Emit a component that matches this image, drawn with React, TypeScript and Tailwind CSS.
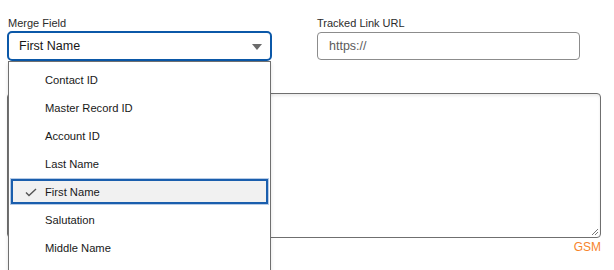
import React from "react";

const items = [
  "Contact ID",
  "Master Record ID",
  "Account ID",
  "Last Name",
  "First Name",
  "Salutation",
  "Middle Name",
  "Suffix",
];

const App: React.FC = () => {
  const selected = "First Name";

  return (
    <div className="relative h-[270px] w-[614px] overflow-hidden bg-white font-['Liberation_Sans',Arial,sans-serif] text-[#181818]">
      <div className="flex pl-[7px] pt-[16px]">
        <div className="w-[265px]">
          <label className="block pl-[1px] text-[11px] leading-[14px] text-[#2b2b2b]">
            Merge Field
          </label>
          <div className="mt-[1px] flex h-[30px] items-center justify-between rounded-[5px] border-2 border-[#0b58a8] bg-white pl-[10px] pr-[8px] text-[12.5px]">
            <span>First Name</span>
            <svg width="10" height="6" viewBox="0 0 10 6" className="mt-[1px]">
              <path d="M0 0 L10 0 L5 6 Z" fill="#6b6b6b" />
            </svg>
          </div>
        </div>
        <div className="ml-[45px] w-[263px]">
          <label className="block text-[11px] leading-[14px] text-[#2b2b2b]">
            Tracked Link URL
          </label>
          <div className="mt-[2px] flex h-[28px] items-center rounded-[4px] border border-[#8c8c8c] bg-white pl-[11px] text-[12.5px] text-[#5c5c5c]">
            https://
          </div>
        </div>
      </div>

      <div className="mt-[32px] pl-[7px]">
        <div className="relative h-[145px] w-[594px] rounded-[4px] border border-[#6f6f6f] bg-white shadow-[inset_0_2px_3px_rgba(0,0,0,0.08)]">
          <svg
            width="8"
            height="8"
            viewBox="0 0 8 8"
            className="absolute bottom-[1px] right-[1px]"
          >
            <path d="M7 1 L1 7 M7 4 L4 7" stroke="#777" strokeWidth="1" />
          </svg>
        </div>
        <div className="flex w-[594px] justify-end pt-[2px] text-[12px] leading-[14px] text-[#f7842b]">
          GSM
        </div>
      </div>

      <div className="absolute left-[8px] top-[61px] h-[240px] w-[263px] border border-[#707070] bg-white pt-[4px] shadow-[0_2px_4px_rgba(0,0,0,0.12)]">
        {items.map((item) =>
          item === selected ? (
            <div key={item} className="h-[28px] px-[2px] pt-[1px]">
              <div className="flex h-[25px] items-center border-2 border-[#1a5ead] bg-[#f1f1f1] pt-[1px] ring-1 ring-[#b6cbe6]">
                <svg
                  width="12"
                  height="9"
                  viewBox="0 0 12 9"
                  className="ml-[12px] mr-[8px]"
                >
                  <path
                    d="M1 4.5 L4 7.5 L11 1"
                    fill="none"
                    stroke="#555"
                    strokeWidth="1.4"
                  />
                </svg>
                <span className="text-[11.2px]">{item}</span>
              </div>
            </div>
          ) : (
            <div
              key={item}
              className="flex h-[28px] items-center pl-[36px] text-[11.2px]"
            >
              {item}
            </div>
          )
        )}
      </div>
    </div>
  );
};

export default App;
